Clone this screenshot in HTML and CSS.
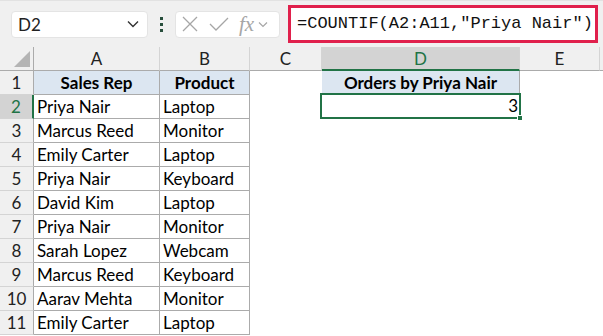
FILE: index.html
```html
<!DOCTYPE html>
<html lang="en">
<head>
    <meta charset="UTF-8">
    <title>COUNTIF example</title>
    <link rel="stylesheet" href="styles.css">
</head>
<body>
    <div class="toolbar">
        <div class="name-box">
            <span>D2</span>
            <svg width="12" height="8" viewBox="0 0 12 8"><path d="M1 1.5 L6 6.5 L11 1.5" fill="none" stroke="#333" stroke-width="1.4"/></svg>
        </div>
        <div class="dots"><i></i><i></i><i></i></div>
        <div class="fx-box">
            <svg width="18" height="18" viewBox="0 0 18 18"><path d="M2 2 L16 16 M16 2 L2 16" stroke="#a6a6a6" stroke-width="1.3"/></svg>
            <svg width="20" height="18" viewBox="0 0 20 18"><path d="M1 9 L7 15 L19 3" fill="none" stroke="#a6a6a6" stroke-width="1.3"/></svg>
            <span class="fx">fx</span>
            <svg width="10" height="7" viewBox="0 0 10 7"><path d="M1 1.5 L5 5.5 L9 1.5" fill="none" stroke="#a6a6a6" stroke-width="1.2"/></svg>
        </div>
        <div class="formula">=COUNTIF(A2:A11,"Priya Nair")</div>
    </div>

    <div class="sheet">
        <div class="corner"><span class="tri"></span></div>
        <div class="col-head">A</div>
        <div class="col-head">B</div>
        <div class="col-head">C</div>
        <div class="col-head active">D</div>
        <div class="col-head">E</div>
        <div class="col-head rest"></div>

        <div class="row-head">1</div>
        <div class="cell th">Sales Rep</div>
        <div class="cell th">Product</div>
        <div class="cell"></div>
        <div class="cell th">Orders by Priya Nair</div>
        <div class="cell"></div>
        <div class="cell"></div>

        <div class="row-head active">2</div>
        <div class="cell td">Priya Nair</div>
        <div class="cell td">Laptop</div>
        <div class="cell"></div>
        <div class="cell td num selected">3<span class="handle"></span></div>
        <div class="cell"></div>
        <div class="cell"></div>

        <div class="row-head">3</div>
        <div class="cell td">Marcus Reed</div>
        <div class="cell td">Monitor</div>
        <div class="cell"></div><div class="cell"></div><div class="cell"></div><div class="cell"></div>

        <div class="row-head">4</div>
        <div class="cell td">Emily Carter</div>
        <div class="cell td">Laptop</div>
        <div class="cell"></div><div class="cell"></div><div class="cell"></div><div class="cell"></div>

        <div class="row-head">5</div>
        <div class="cell td">Priya Nair</div>
        <div class="cell td">Keyboard</div>
        <div class="cell"></div><div class="cell"></div><div class="cell"></div><div class="cell"></div>

        <div class="row-head">6</div>
        <div class="cell td">David Kim</div>
        <div class="cell td">Laptop</div>
        <div class="cell"></div><div class="cell"></div><div class="cell"></div><div class="cell"></div>

        <div class="row-head">7</div>
        <div class="cell td">Priya Nair</div>
        <div class="cell td">Monitor</div>
        <div class="cell"></div><div class="cell"></div><div class="cell"></div><div class="cell"></div>

        <div class="row-head">8</div>
        <div class="cell td">Sarah Lopez</div>
        <div class="cell td">Webcam</div>
        <div class="cell"></div><div class="cell"></div><div class="cell"></div><div class="cell"></div>

        <div class="row-head">9</div>
        <div class="cell td">Marcus Reed</div>
        <div class="cell td">Keyboard</div>
        <div class="cell"></div><div class="cell"></div><div class="cell"></div><div class="cell"></div>

        <div class="row-head">10</div>
        <div class="cell td">Aarav Mehta</div>
        <div class="cell td">Monitor</div>
        <div class="cell"></div><div class="cell"></div><div class="cell"></div><div class="cell"></div>

        <div class="row-head">11</div>
        <div class="cell td">Emily Carter</div>
        <div class="cell td">Laptop</div>
        <div class="cell"></div><div class="cell"></div><div class="cell"></div><div class="cell"></div>
    </div>
</body>
</html>
```

FILE: styles.css
```css
body {
    margin: 0;
    padding: 0;
    width: 603px;
    height: 336px;
    overflow: hidden;
    background: #fff;
    font-family: Lato, "Liberation Sans", sans-serif;
    color: #000;
}

/* formula bar area */
.toolbar {
    height: 47px;
    box-sizing: border-box;
    background: #f0f0f0;
    border-top: 1px solid #e2e2e2;
    display: flex;
    align-items: center;
    padding-left: 11px;
}

.name-box {
    width: 137px;
    height: 27px;
    box-sizing: border-box;
    background: #fff;
    border-radius: 4px;
    border: 1px solid #e4e4e4;
    display: flex;
    align-items: center;
    justify-content: space-between;
    padding: 0 8px 0 6px;
    font-size: 17px;
    color: #222;
}

.dots {
    width: 27px;
    display: flex;
    flex-direction: column;
    align-items: center;
    gap: 3px;
}

.dots i {
    width: 3px;
    height: 3px;
    background: #274e3c;
}

.fx-box {
    width: 105px;
    height: 27px;
    box-sizing: border-box;
    background: #fff;
    border-radius: 4px;
    border: 1px solid #e4e4e4;
    display: flex;
    align-items: center;
    gap: 10px;
    padding-left: 5px;
}

.fx {
    font-family: "Liberation Serif", serif;
    font-style: italic;
    font-size: 21px;
    color: #a6a6a6;
    margin-right: -6px;
}

.formula {
    margin-left: 8px;
    width: 310px;
    height: 38px;
    box-sizing: border-box;
    border: 3px solid #e0204c;
    background: #fff;
    font-family: "Liberation Mono", monospace;
    font-size: 17px;
    line-height: 32px;
    padding-left: 6px;
    color: #111;
    white-space: nowrap;
}

/* grid */
.sheet {
    display: grid;
    grid-template-columns: 34px 126px 90px 72px 198px 80px 1fr;
    grid-auto-rows: 24px;
}

.sheet > div {
    box-sizing: border-box;
}

.corner {
    background: #f0f0f0;
    border-right: 1px solid #ababab;
    border-bottom: 1px solid #ababab;
    position: relative;
}

.tri {
    position: absolute;
    right: 3px;
    bottom: 3px;
    width: 0;
    height: 0;
    border-left: 16px solid transparent;
    border-bottom: 16px solid #b4b4b4;
}

.col-head {
    background: #f0f0f0;
    border-right: 1px solid #d4d4d4;
    border-bottom: 1px solid #ababab;
    text-align: center;
    font-size: 17px;
    line-height: 24px;
    color: #222;
}

.col-head.active {
    background: #d3d3d3;
    color: #217346;
    border-bottom: 2px solid #217346;
}

.col-head.rest {
    border-right: none;
}

.row-head {
    background: #f0f0f0;
    border-right: 1px solid #ababab;
    border-bottom: 1px solid #d4d4d4;
    text-align: center;
    font-size: 17px;
    line-height: 23px;
    color: #222;
}

.row-head.active {
    background: #d3d3d3;
    color: #217346;
    border-right: 2px solid #217346;
}

.cell {
    font-size: 17px;
    line-height: 23px;
    padding: 0 3px;
    white-space: nowrap;
}

.th {
    background: #dce6f1;
    font-weight: bold;
    text-align: center;
    border-right: 1px solid #ababab;
    border-bottom: 1px solid #ababab;
}

.td {
    border-right: 1px solid #ababab;
    border-bottom: 1px solid #ababab;
}

.num {
    text-align: right;
}

.selected {
    position: relative;
    border: 2px solid #217346;
    margin: -2px -1px 0 -2px;
    line-height: 21px;
    padding-right: 1px;
}

.handle {
    position: absolute;
    right: -4px;
    bottom: -4px;
    width: 6px;
    height: 6px;
    background: #217346;
    border: 1px solid #fff;
    box-sizing: border-box;
}
```
